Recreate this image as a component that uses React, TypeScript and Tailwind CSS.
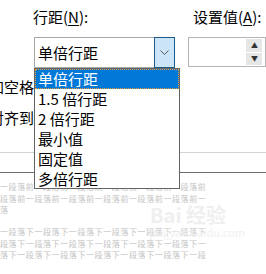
const font = { fontFamily: '"Noto Sans CJK SC", "Noto Sans", sans-serif' };

const options = ['单倍行距', '1.5 倍行距', '2 倍行距', '最小值', '固定值', '多倍行距'];

const before = '一段落前一段落前一段落前一段落前一段落前一段落前';
const after = '一段落下一段落下一段落下一段落下一段落下一段落下';

function Chevron() {
  return (
    <svg width="9" height="6" viewBox="0 0 9 6" fill="none">
      <path d="M0.5 0.5L4.5 4.5L8.5 0.5" stroke="#5a5a5a" strokeWidth="1" />
    </svg>
  );
}

export default function App() {
  return (
    <div
      className="relative w-[266px] h-[274px] overflow-hidden bg-white text-black"
      style={font}
    >
      {/* labels */}
      <div className="flex pt-[6px] pl-[33px] text-[15px] leading-[22px]">
        <div className="w-[160px]">
          行距(<span className="underline underline-offset-2">N</span>):
        </div>
        <div>
          设置值(<span className="underline underline-offset-2">A</span>):
        </div>
      </div>

      {/* combo + spin */}
      <div className="flex mt-[9px] pl-[34px]">
        <div className="flex w-[146px] h-[31px] border border-[#a8a8a8] bg-white">
          <div className="flex-1 pl-[3px] text-[15px] leading-[29px]">单倍行距</div>
          <div className="flex items-center justify-center w-[21px] -my-px -mr-px bg-[#cce4f7] border border-[#1f5a8c]">
            <Chevron />
          </div>
        </div>
        <div className="flex ml-[13px] w-[80px] h-[30px] border border-[#b4b4b4]">
          <div className="w-[57px]" />
          <div className="flex flex-col gap-px w-[16px] py-px">
            <div className="flex-1 flex items-center justify-center bg-[#e6e6e6] text-[7px] leading-none text-[#333]">▲</div>
            <div className="flex-1 flex items-center justify-center bg-[#e6e6e6] text-[7px] leading-none text-[#333]">▼</div>
          </div>
        </div>
      </div>

      {/* checkbox rows, clipped at the left edge */}
      <div className="flex flex-col gap-[9px] mt-[8px] text-[15px] leading-[22px]">
        <div className="flex justify-end w-[34px] overflow-hidden whitespace-nowrap">
          不要在相同样式的段落间添加空格
        </div>
        <div className="flex justify-end w-[34px] overflow-hidden whitespace-nowrap">
          如果定义了文档网格，则对齐到
        </div>
      </div>

      <div className="mt-[23px] h-px bg-[#d4d4d4]" />

      {/* preview */}
      <div className="mt-[19px] border-t border-[#6e6e6e] pt-[8px] text-[8px] leading-[11.5px] tracking-[0.6px] text-[#c4c4c4] whitespace-nowrap">
        <div>{before}</div>
        <div>{before.slice(1) + '一'}</div>
        <div>落</div>
        <div className="mt-[10.5px]">{after}</div>
        <div>{after.slice(1) + '一'}</div>
        <div>{after.slice(2) + '一段'}</div>
      </div>

      {/* watermark */}
      <div className="absolute left-[150px] top-[204px] flex flex-col items-start text-[#efefef] pointer-events-none">
        <div className="text-[20px] font-bold leading-[22px]">Bai 经验</div>
        <div className="text-[11px] leading-[13px]">jingyan.baidu.com</div>
      </div>

      {/* dropdown list */}
      <div className="absolute left-[34px] top-[68px] w-[146px] h-[121px] border border-[#646464] bg-white text-[15px]">
        {options.map((o, i) => (
          <div
            key={o}
            className={
              i === 0
                ? 'h-[20px] pl-[2px] leading-[18px] bg-[#0078d7] text-white border border-dotted border-[#f0a030]'
                : 'h-[20px] pl-[3px] leading-[20px]'
            }
          >
            {o}
          </div>
        ))}
      </div>
    </div>
  );
}
